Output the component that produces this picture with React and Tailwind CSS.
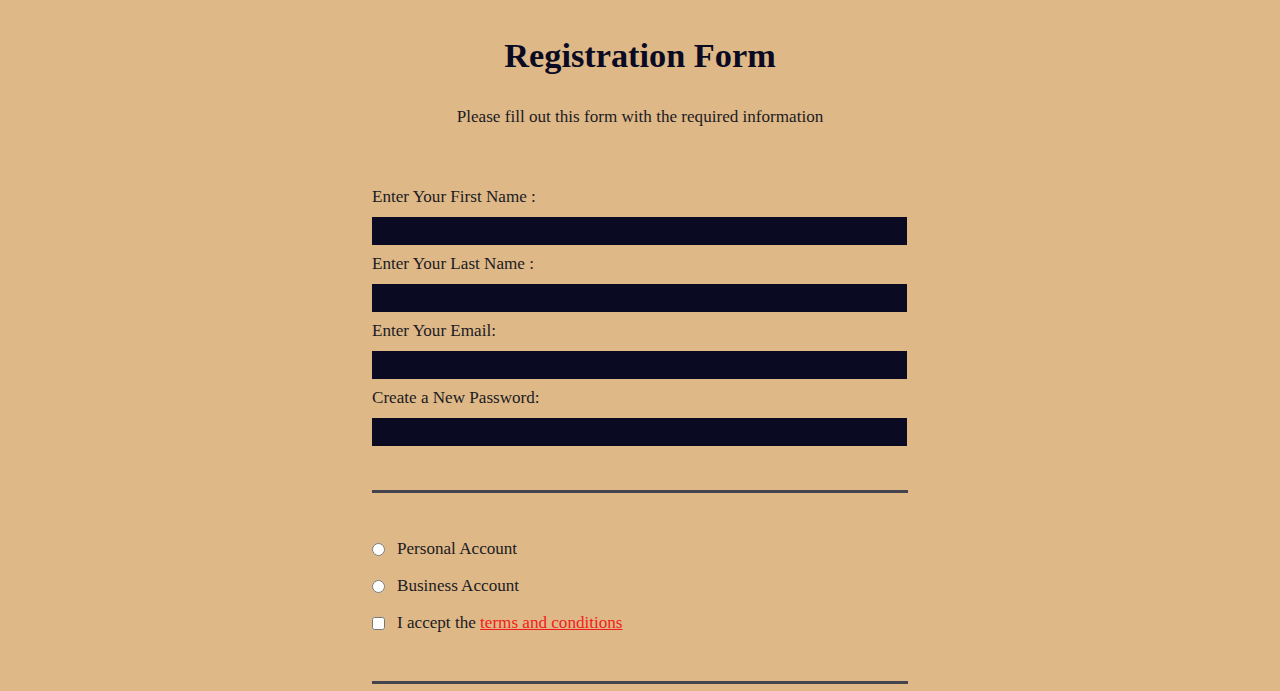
import { useState } from 'react';

const fields = [
  { id: 'first-name', label: 'Enter Your First Name :', type: 'text' },
  { id: 'last-name', label: 'Enter Your Last Name :', type: 'text' },
  { id: 'email', label: 'Enter Your Email:', type: 'email' },
  { id: 'new-password', label: 'Create a New Password:', type: 'password' },
];

const App = () => {
  const [account, setAccount] = useState('');
  const [accepted, setAccepted] = useState(false);

  return (
    <div className="min-h-[691px] bg-[#deb887] text-[#1b1b23] font-['Liberation_Serif','Times_New_Roman',serif] text-[17.1px] leading-[18px] pb-10">
      <h1 className="pt-[36px] text-center text-[34.3px] leading-[38px] font-bold text-[#0a0a23]">
        Registration Form
      </h1>
      <p className="mt-[34px] text-center">Please fill out this form with the required information</p>

      <form className="w-[536px] mx-auto mt-[62px]" onSubmit={(e) => e.preventDefault()}>
        {/* Account details */}
        <div className="flex flex-col border-b-[3px] border-[#444450] pb-[44px]">
          {fields.map((f, i) => (
            <label key={f.id} htmlFor={f.id} className={`flex flex-col ${i > 0 ? 'mt-[10px]' : ''}`}>
              <span className="h-[18px]">{f.label}</span>
              <input
                id={f.id}
                type={f.type}
                className="mt-[11px] h-[28px] w-[535px] bg-[#0a0a23] text-white px-1 outline-none"
              />
            </label>
          ))}
        </div>

        {/* Account type + terms */}
        <div className="flex flex-col gap-[19px] pt-[47px] pb-[49px] border-b-[3px] border-[#444450]">
          <label className="flex items-center gap-[12px] h-[18px]">
            <input
              type="radio"
              name="account-type"
              className="m-0 w-[13px] h-[13px]"
              checked={account === 'personal'}
              onChange={() => setAccount('personal')}
            />
            Personal Account
          </label>
          <label className="flex items-center gap-[12px] h-[18px]">
            <input
              type="radio"
              name="account-type"
              className="m-0 w-[13px] h-[13px]"
              checked={account === 'business'}
              onChange={() => setAccount('business')}
            />
            Business Account
          </label>
          <label className="flex items-center gap-[12px] h-[18px]">
            <input
              type="checkbox"
              className="m-0 w-[13px] h-[13px]"
              checked={accepted}
              onChange={(e) => setAccepted(e.target.checked)}
            />
            <span>
              I accept the{' '}
              <a href="#" className="text-[#f21b1b] underline">terms and conditions</a>
            </span>
          </label>
        </div>
      </form>
    </div>
  );
};

export default App;
